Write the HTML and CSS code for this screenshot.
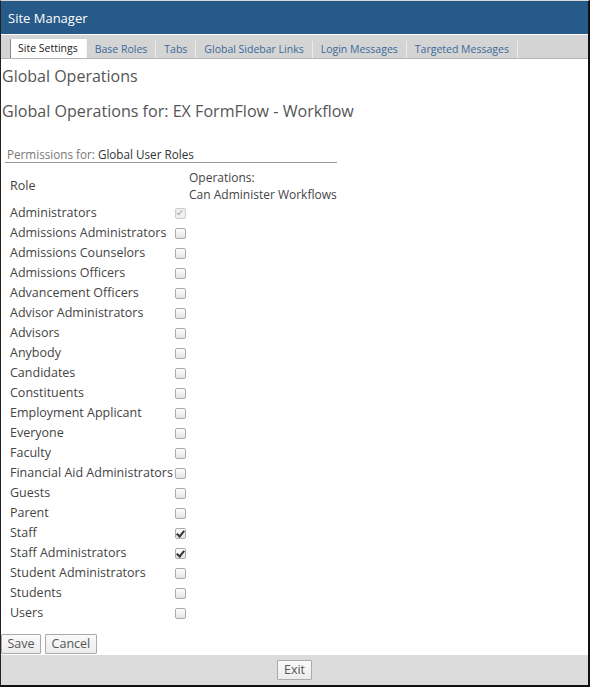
FILE: index.html
```html
<!DOCTYPE html>
<html>
<head>
<meta charset="utf-8">
<link rel="stylesheet" href="styles.css">
</head>
<body>
<div class="frame">
  <div class="header">Site Manager</div>
  <div class="tabbar">
    <span class="tab active">Site Settings</span>
    <span class="tab">Base Roles</span>
    <span class="tab">Tabs</span>
    <span class="tab">Global Sidebar Links</span>
    <span class="tab">Login Messages</span>
    <span class="tab">Targeted Messages</span>
  </div>
  <div class="content">
    <h1 class="h1">Global Operations</h1>
    <h2 class="h2">Global Operations for: EX FormFlow - Workflow</h2>
    <div class="perm"><span class="perm-label">Permissions for:</span> Global User Roles</div>
    <div class="grid">
      <div class="hrole">Role</div>
      <div class="hop">Operations:<br>Can Administer Workflows</div>
      <div class="role">Administrators</div><div class="cell"><span class="cb disabled checked"></span></div>
      <div class="role">Admissions Administrators</div><div class="cell"><span class="cb"></span></div>
      <div class="role">Admissions Counselors</div><div class="cell"><span class="cb"></span></div>
      <div class="role">Admissions Officers</div><div class="cell"><span class="cb"></span></div>
      <div class="role">Advancement Officers</div><div class="cell"><span class="cb"></span></div>
      <div class="role">Advisor Administrators</div><div class="cell"><span class="cb"></span></div>
      <div class="role">Advisors</div><div class="cell"><span class="cb"></span></div>
      <div class="role">Anybody</div><div class="cell"><span class="cb"></span></div>
      <div class="role">Candidates</div><div class="cell"><span class="cb"></span></div>
      <div class="role">Constituents</div><div class="cell"><span class="cb"></span></div>
      <div class="role">Employment Applicant</div><div class="cell"><span class="cb"></span></div>
      <div class="role">Everyone</div><div class="cell"><span class="cb"></span></div>
      <div class="role">Faculty</div><div class="cell"><span class="cb"></span></div>
      <div class="role">Financial Aid Administrators</div><div class="cell"><span class="cb"></span></div>
      <div class="role">Guests</div><div class="cell"><span class="cb"></span></div>
      <div class="role">Parent</div><div class="cell"><span class="cb"></span></div>
      <div class="role">Staff</div><div class="cell"><span class="cb checked"></span></div>
      <div class="role">Staff Administrators</div><div class="cell"><span class="cb checked"></span></div>
      <div class="role">Student Administrators</div><div class="cell"><span class="cb"></span></div>
      <div class="role">Students</div><div class="cell"><span class="cb"></span></div>
      <div class="role">Users</div><div class="cell"><span class="cb"></span></div>
    </div>
    <div class="buttons">
      <button class="btn">Save</button>
      <button class="btn">Cancel</button>
    </div>
  </div>
  <div class="footer"><button class="btn">Exit</button></div>
</div>
</body>
</html>
```
FILE: styles.css
```css
html, body { margin: 0; padding: 0; background: #fff; }
body { font-family: "Open Sans", "DejaVu Sans", sans-serif; color: #444; }
.frame {
  width: 587px;
  height: 684px;
  border-top: 1px solid #d8d8d8;
  border-left: 1px solid #222;
  border-right: 2px solid #111;
  border-bottom: 2px solid #111;
  display: flex;
  flex-direction: column;
  overflow: hidden;
}
.header {
  height: 33px;
  background: #265a88;
  color: #fff;
  font-size: 13px;
  line-height: 34px;
  padding-left: 7px;
  border-bottom: 1px solid #fff;
  flex: none;
}
.tabbar {
  height: 19px;
  padding-top: 4px;
  padding-left: 9px;
  background: #d4d4d4;
  border-bottom: 1px solid #b4b4b4;
  display: flex;
  align-items: flex-end;
  flex: none;
}
.tab {
  font-size: 10.5px;
  color: #3b6a9a;
  padding: 0 8px 0 8px;
  height: 17px;
  line-height: 17px;
  border-right: 1px solid #ececec;
}
.tab.active {
  background: #fff;
  color: #222;
  height: 19px;
  line-height: 19px;
  border-left: 1px solid #888;
  border-right: 1px solid #f4f4f4;
  padding: 0 8px 0 7px;
}
.content { flex: 1; min-height: 0; }
.h1 {
  font-size: 16px;
  font-weight: normal;
  color: #555;
  margin: 6px 0 0 1px;
  line-height: 22px;
}
.h2 {
  font-size: 16.1px;
  font-weight: normal;
  color: #555;
  margin: 13px 0 0 1px;
  line-height: 22px;
}
.perm {
  font-size: 11.7px;
  color: #333;
  margin: 25px 0 0 4px;
  width: 330px;
  padding-left: 2px;
  line-height: 15px;
  border-bottom: 1px solid #999;
}
.perm-label { color: #777; }
.grid {
  display: grid;
  grid-template-columns: 165px auto;
  margin: 6px 0 0 9px;
  font-size: 12.5px;
  color: #444;
}
.hrole { line-height: 34px; height: 34px; }
.hop { line-height: 17px; padding-left: 14px; font-size: 12px; }
.role { line-height: 20px; height: 20px; white-space: nowrap; }
.cell { height: 20px; display: flex; align-items: center; padding-left: 0; }
.cb {
  width: 9px;
  height: 9px;
  border: 1px solid #aaa;
  border-radius: 2px;
  background: linear-gradient(#fdfdfd, #e4e4e4);
  position: relative;
}
.cb.checked::after {
  content: "";
  position: absolute;
  left: 2px;
  top: 0px;
  width: 3px;
  height: 6px;
  border-right: 2px solid #333;
  border-bottom: 2px solid #333;
  transform: rotate(40deg);
}
.cb.disabled { border-color: #ccc; background: #f0f0f0; }
.cb.disabled.checked::after { border-color: #aaa; width: 2px; height: 5px; border-width: 0 1.5px 1.5px 0; }
.buttons { display: flex; gap: 4px; margin-top: 11px; padding-left: 0; }
.btn {
  font-family: "Open Sans", "DejaVu Sans", sans-serif;
  font-size: 12.5px;
  color: #555;
  background: linear-gradient(#fafafa, #ececec);
  border: 1px solid #aaa;
  border-radius: 1px;
  height: 20px;
  padding: 0 5.5px;
  line-height: 18px;
  margin: 0;
}
.footer {
  height: 30px;
  background: #dcdcdc;
  display: flex;
  justify-content: center;
  align-items: center;
  flex: none;
}
```
